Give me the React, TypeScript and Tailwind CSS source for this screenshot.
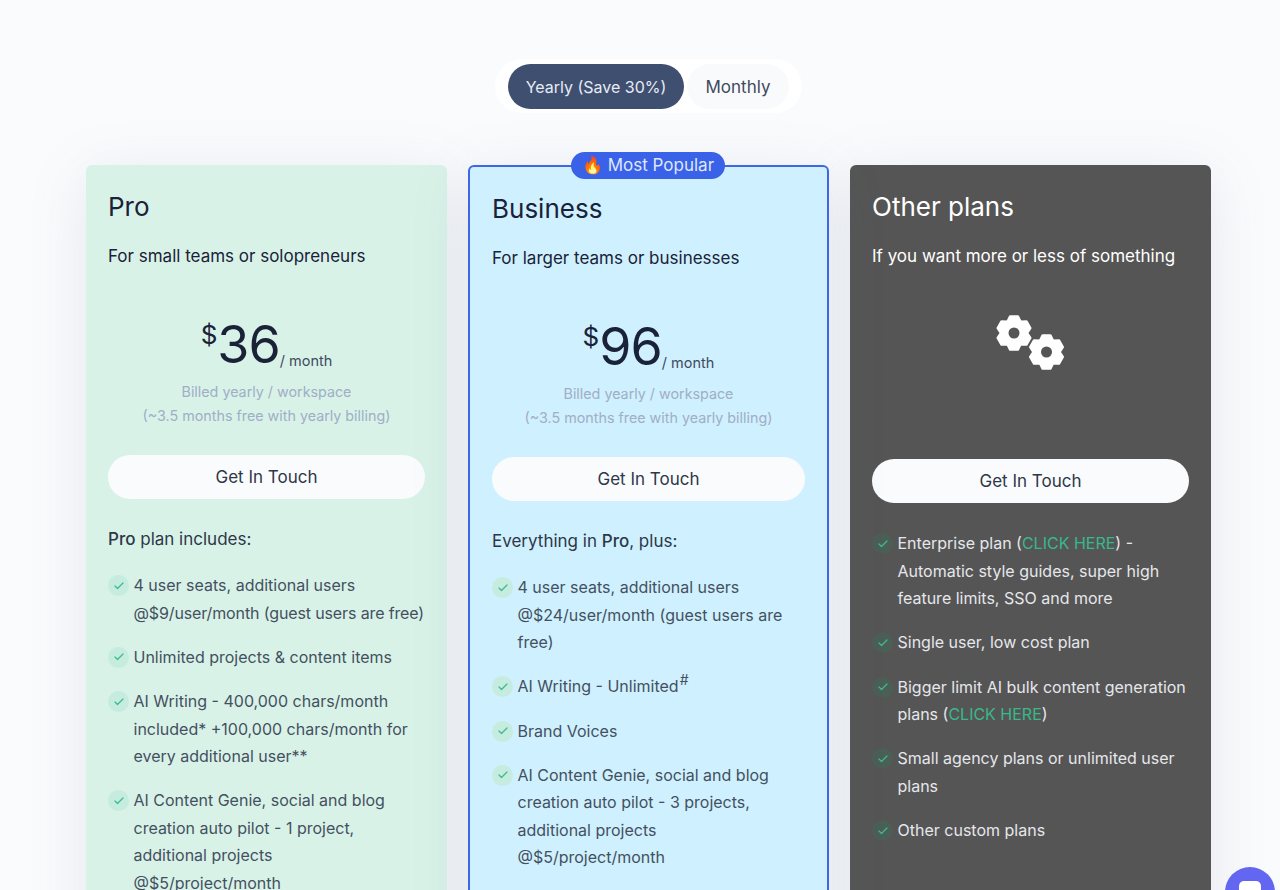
import { Check } from "lucide-react"
import type { ReactNode } from "react"

const gearPoints = (r1: number, r2: number) => {
    const pts: string[] = []
    for (let i = 0; i < 6; i++) {
        const a = i * 60 + 30
        for (const [d, r] of [[-27, r2], [-13, r1], [13, r1], [27, r2]]) {
            const t = ((a + d) * Math.PI) / 180
            pts.push(`${(r * Math.cos(t)).toFixed(2)},${(r * Math.sin(t)).toFixed(2)}`)
        }
    }
    return pts.join(" ")
}

const Gears = () => (
    <svg width="72" height="60" viewBox="0 0 72 60" className="block">
        <g transform="translate(18 21)">
            <polygon points={gearPoints(17, 13.5)} fill="#fff" stroke="#fff" strokeWidth="2.5" strokeLinejoin="round" />
            <circle r="5.5" fill="#555" />
        </g>
        <g transform="translate(50.5 40)">
            <polygon points={gearPoints(17, 13.5)} fill="#fff" stroke="#fff" strokeWidth="2.5" strokeLinejoin="round" />
            <circle r="5.5" fill="#555" />
        </g>
    </svg>
)

const Feature = ({ children, dark }: { children: ReactNode; dark?: boolean }) => (
    <li className="flex gap-[4.5px] mb-[15.75px]">
        <span className={`mt-[4px] flex h-[21px] w-[21px] shrink-0 items-center justify-center rounded-full ${dark ? "bg-[#4b5f57]" : "bg-[#c6ebdf]"}`}>
            <Check className="h-[12px] w-[12px] text-[#3dbb90]" strokeWidth={2.5} />
        </span>
        <span className="pt-[1px]">{children}</span>
    </li>
)

const Price = ({ amount }: { amount: string }) => (
    <div className="mt-[39px] flex flex-col items-center">
        <div className="flex h-[71px] items-end justify-center text-[#1a2238]">
            <span className="mb-[30px] text-[26px] leading-[30px]">$</span>
            <span className="mb-[5px] text-[52px] leading-[60px] tracking-[-1px]">{amount}</span>
            <span className="mb-[9px] text-[14.5px] leading-[20px] text-[#3f4a5f]">/ month</span>
        </div>
        <p className="text-[14.3px] leading-[24px] text-[#a0aec6]">Billed yearly / workspace</p>
        <p className="text-[14.3px] leading-[24px] text-[#a0aec6]">(~3.5 months free with yearly billing)</p>
    </div>
)

const GetInTouch = ({ className }: { className: string }) => (
    <button className={`block h-[44px] w-full rounded-full bg-[#fafbfd] pt-[2px] text-[17px] text-[#2d3748] ${className}`}>Get In Touch</button>
)

export default function App() {
    const card = "h-[900px] w-[361px] shrink-0 rounded-[6px] px-[22px] pt-[26px] shadow-[0_10px_60px_rgba(100,116,139,0.14)]"
    const title = "text-[26px] leading-[32px]"
    const sub = "mt-[19px] text-[17px] leading-[28px]"
    const list = "text-[16px] leading-[27.5px] text-[#44505f]"
    return (
        <div className="relative h-[890px] overflow-hidden bg-[#fafbfd] font-['Inter','Liberation_Sans',sans-serif]">
            <div className="flex justify-center pt-[59px] pl-[17px]">
                <div className="flex h-[54px] items-center gap-[3px] rounded-full bg-white px-[13px]">
                    <button className="h-[45px] w-[176px] rounded-full bg-[#3f4f70] pt-[2px] text-[16px] text-[#e6ebf5]">Yearly (Save 30%)</button>
                    <button className="h-[45px] w-[102px] rounded-full bg-[#f9fafc] pt-[3px] text-[17px] text-[#3f4a5f]">Monthly</button>
                </div>
            </div>
            <div className="mt-[52px] flex justify-center gap-[21px] pl-[17px]">
                <section className={`${card} bg-[#d9f2e8] text-[#1a2238]`}>
                    <h2 className={title}>Pro</h2>
                    <p className={sub}>For small teams or solopreneurs</p>
                    <Price amount="36" />
                    <GetInTouch className="mt-[27px]" />
                    <p className="mt-[26px] text-[17px] leading-[28px] text-[#2d3748]"><strong className="font-medium">Pro</strong> plan includes:</p>
                    <ul className={`mt-[18px] ${list}`}>
                        <Feature>4 user seats, additional users <span className="whitespace-nowrap tracking-[-0.13px]">@$9/user/month (guest users are free)</span></Feature>
                        <Feature>Unlimited projects &amp; content items</Feature>
                        <Feature>AI Writing - 400,000 chars/month included* +100,000 chars/month for every additional user**</Feature>
                        <Feature>AI Content Genie, social and blog creation auto pilot - 1 project, additional projects<br />@$5/project/month</Feature>
                    </ul>
                </section>
                <section className={`${card} relative border-2 border-[#3f66e6] bg-[#cff0fe] text-[#1a2238]`}>
                    <div className="absolute left-[101px] top-[-15px] flex h-[27px] w-[154px] items-center justify-center rounded-full bg-[#3a62e8] text-[17px] text-[#dfe7fb]">🔥 Most Popular</div>
                    <h2 className={title}>Business</h2>
                    <p className={sub}>For larger teams or businesses</p>
                    <Price amount="96" />
                    <GetInTouch className="mt-[27px]" />
                    <p className="mt-[26px] text-[17px] leading-[28px] text-[#2d3748]">Everything in <strong className="font-medium">Pro</strong>, plus:</p>
                    <ul className={`mt-[18px] ${list}`}>
                        <Feature>4 user seats, additional users @$24/user/month (guest users are free)</Feature>
                        <Feature>AI Writing - Unlimited<sup className="ml-[1px] text-[14px] leading-none">#</sup></Feature>
                        <Feature>Brand Voices</Feature>
                        <Feature>AI Content Genie, social and blog creation auto pilot - 3 projects, additional projects<br />@$5/project/month</Feature>
                    </ul>
                </section>
                <section className={`${card} bg-[#555555] text-white`}>
                    <h2 className={title}>Other plans</h2>
                    <p className={sub}>If you want more or less of something</p>
                    <div className="mt-[42px] flex h-[147px] justify-center pl-[2px]"><Gears /></div>
                    <GetInTouch className="mt-[0px]" />
                    <ul className="mt-[26px] text-[16px] leading-[27.5px] text-[#e5e7eb]">
                        <Feature dark>Enterprise plan (<a className="text-[#38b98c]">CLICK HERE</a>) - Automatic style guides, super high feature limits, SSO and more</Feature>
                        <Feature dark>Single user, low cost plan</Feature>
                        <Feature dark>Bigger limit AI bulk content generation plans (<a className="text-[#38b98c]">CLICK HERE</a>)</Feature>
                        <Feature dark>Small agency plans or unlimited user plans</Feature>
                        <Feature dark>Other custom plans</Feature>
                    </ul>
                </section>
            </div>
            <div className="absolute left-[1225px] top-[867px] flex h-[50px] w-[50px] justify-center rounded-full bg-[#6366f1] pt-[14px]">
                <div className="h-[22px] w-[22px] rounded-[5px] bg-white" />
            </div>
        </div>
    )
}
